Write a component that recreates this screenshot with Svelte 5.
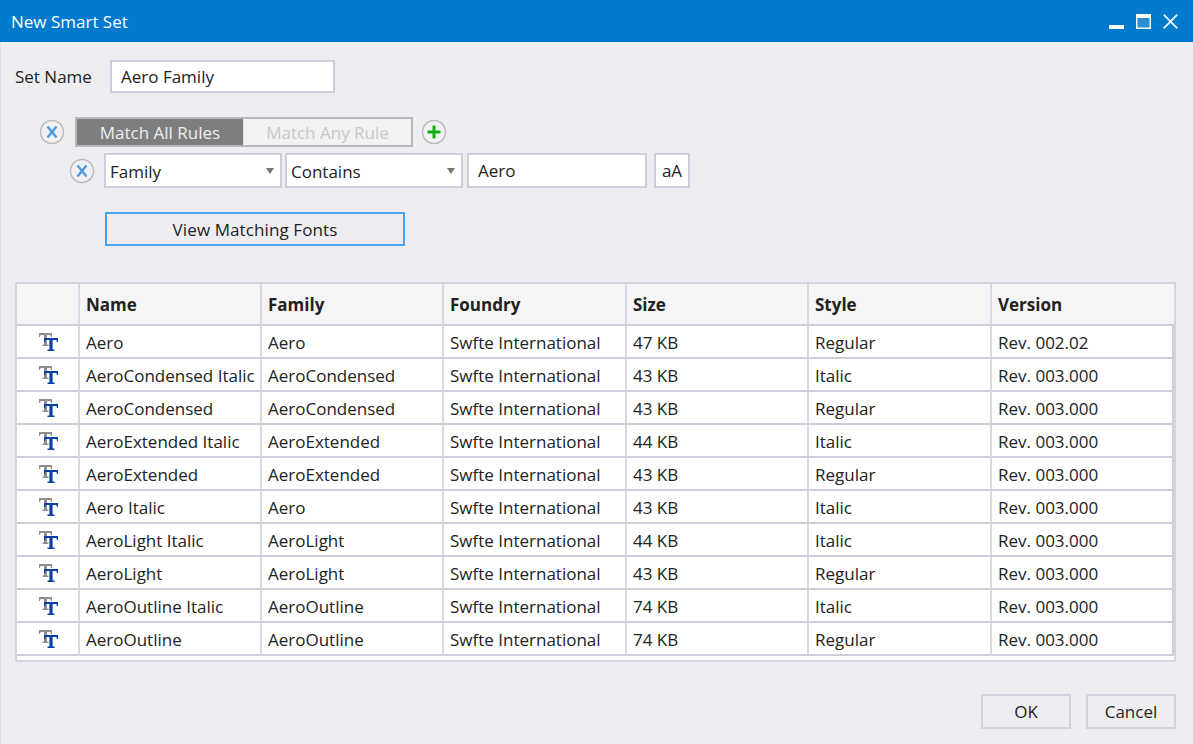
<script>
  const fonts = [
    ['Aero','Aero','47 KB','Regular','Rev. 002.02'],
    ['AeroCondensed Italic','AeroCondensed','43 KB','Italic','Rev. 003.000'],
    ['AeroCondensed','AeroCondensed','43 KB','Regular','Rev. 003.000'],
    ['AeroExtended Italic','AeroExtended','44 KB','Italic','Rev. 003.000'],
    ['AeroExtended','AeroExtended','43 KB','Regular','Rev. 003.000'],
    ['Aero Italic','Aero','43 KB','Italic','Rev. 003.000'],
    ['AeroLight Italic','AeroLight','44 KB','Italic','Rev. 003.000'],
    ['AeroLight','AeroLight','43 KB','Regular','Rev. 003.000'],
    ['AeroOutline Italic','AeroOutline','74 KB','Italic','Rev. 003.000'],
    ['AeroOutline','AeroOutline','74 KB','Regular','Rev. 003.000']
  ];
  const heads = ['Name','Family','Foundry','Size','Style','Version'];
</script>

{#snippet removeIcon()}
  <svg class="round" width="26" height="26" viewBox="0 0 26 26">
    <circle cx="13" cy="13" r="11.5" fill="#f1f1f4" stroke="#bcbcbc" stroke-width="1.5"/>
    <path d="M8.5 7.5 L17.5 18.5 M17.5 7.5 L8.5 18.5" stroke="#4a9be0" stroke-width="2.4" fill="none"/>
  </svg>
{/snippet}

<div class="window">
  <header class="titlebar">
    <span class="title">New Smart Set</span>
    <div class="controls">
      <svg class="min" width="15" height="4" viewBox="0 0 15 4"><rect width="15" height="4" fill="#fff"/></svg>
      <svg width="15" height="15" viewBox="0 0 15 15"><rect x="1" y="4" width="13" height="10" fill="#2a8fd6"/><path d="M0.7 0V15M14.3 0V15M0 14.3H15" stroke="#fff" stroke-width="1.4"/><rect width="15" height="4" fill="#fff"/></svg>
      <svg width="15" height="15" viewBox="0 0 15 15"><path d="M0.7 0.7 L14.3 14.3 M14.3 0.7 L0.7 14.3" stroke="#fff" stroke-width="1.7" fill="none"/></svg>
    </div>
  </header>

  <main class="body">
    <div class="name-row">
      <span class="label">Set Name</span>
      <div class="box name-box">Aero Family</div>
    </div>

    <div class="rule-row">
      {@render removeIcon()}
      <div class="toggle">
        <span class="on">Match All Rules</span>
        <span class="off">Match Any Rule</span>
      </div>
      <svg class="round" width="26" height="26" viewBox="0 0 26 26">
        <circle cx="13" cy="13" r="11.5" fill="#f1f1f4" stroke="#bcbcbc" stroke-width="1.5"/>
        <path d="M13 6.5V19.5M6.5 13H19.5" stroke="#10b010" stroke-width="3" fill="none"/>
      </svg>
    </div>

    <div class="cond-row">
      {@render removeIcon()}
      <div class="box select sel1">Family<i class="caret"></i></div>
      <div class="box select sel2">Contains<i class="caret"></i></div>
      <div class="box value">Aero</div>
      <div class="box case">aA</div>
    </div>

    <button class="view">View Matching Fonts</button>

    <div class="table">
      <div class="row head">
        <div class="cell"></div>
        {#each heads as h}<div class="cell">{h}</div>{/each}
      </div>
      {#each fonts as f}
        <div class="row">
          <div class="cell icon">
            <svg width="19" height="19" viewBox="0 0 19 19">
              <path d="M0 0H13V4H12L11.4 2H8V11.5H9.5V13H3.5V11.5H5V2H1.6L1 4H0Z" fill="#8e8e8e"/>
              <path d="M5 5H19V9H18L17.4 7H13.6V16.5H15.5V18H8.5V16.5H10.4V7H6.6L6 9H5Z" fill="#0a3fa5"/>
            </svg>
          </div>
          <div class="cell">{f[0]}</div>
          <div class="cell">{f[1]}</div>
          <div class="cell">Swfte International</div>
          <div class="cell">{f[2]}</div>
          <div class="cell">{f[3]}</div>
          <div class="cell">{f[4]}</div>
        </div>
      {/each}
    </div>

    <footer class="actions">
      <button class="btn">OK</button>
      <button class="btn">Cancel</button>
    </footer>
  </main>
</div>

<style>
  :global(body) { margin: 0; background: #eeeef2; }
  .window {
    width: 1193px; height: 744px; box-sizing: border-box; overflow: hidden;
    background: #eeeef2; color: #222;
    font-family: "Open Sans", "Noto Sans", sans-serif; font-size: 17px;
    display: flex; flex-direction: column;
  }
  .titlebar {
    height: 42px; flex: none; background: #007acc; color: #fff;
    display: flex; justify-content: space-between; align-items: center;
    padding: 0 15px 0 11px; box-sizing: border-box;
  }
  .controls { display: flex; align-items: flex-start; gap: 12px; align-self: flex-start; padding-top: 14px; }
  .min { margin-top: 11px; }
  .body { flex: 1; display: flex; flex-direction: column; padding: 18px 17px 0 14px; border-left: 1px solid #e2e2e6; }
  .box {
    background: #fff; border: 2px solid #cccedb; box-sizing: border-box;
    display: flex; align-items: center; height: 35px;
  }
  .name-row { display: flex; align-items: center; justify-content: flex-start; }
  .label { width: 95px; }
  .name-box { width: 225px; height: 33px; padding-left: 9px; }
  .rule-row { display: flex; align-items: center; margin: 24px 0 0 24px; height: 30px; }
  .round { flex: none; display: block; }
  .toggle {
    display: flex; margin-left: 10px; width: 338px; height: 30px; box-sizing: border-box;
    border: 2px solid #b7b7b7; background: #f2f2f2;
  }
  .toggle span { display: flex; align-items: center; justify-content: center; }
  .on { width: 166px; background: #7e7e7e; color: #eeeeee; }
  .off { flex: 1; color: #c8c8c8; border-left: 1px solid #dedede; }
  .rule-row .round:last-child { margin-left: 8px; }
  .cond-row { display: flex; align-items: center; margin: 6px 0 0 54px; }
  .select { position: relative; padding: 1px 0 0 4px; }
  .sel1 { width: 178px; margin-left: 9px; }
  .sel2 { width: 178px; margin-left: 3px; }
  .value { width: 180px; margin-left: 4px; padding-left: 9px; }
  .case { width: 36px; margin-left: 7px; justify-content: center; }
  .caret {
    position: absolute; right: 6px; top: 13px; width: 0; height: 0;
    border-left: 4.5px solid transparent; border-right: 4.5px solid transparent; border-top: 6px solid #777;
  }
  .view {
    display: block; width: 300px; height: 34px; margin: 24px 0 0 90px; box-sizing: border-box;
    background: #eeeef2; border: 2px solid #4aa3ee; color: #222; font: inherit; letter-spacing: 0.1px; padding: 0;
  }
  .table {
    margin-top: 36px; width: 1161px; height: 380px; box-sizing: border-box; flex: none;
    background: #fff; border: 2px solid #d3d4df;
  }
  .row {
    display: grid; grid-template-columns: 63px 182px 182px 183px 182px 183px 183px;
    height: 33px; box-sizing: border-box; border-bottom: 2px solid #cccedb; width: 1157px;
    border-right: 2px solid #cccedb;
  }
  .head { height: 42px; background: #f5f5f5; font-weight: 700; border-right: none; }
  .cell {
    border-right: 2px solid #d8d9e3; padding: 1px 0 0 6px; box-sizing: border-box;
    display: flex; align-items: center; white-space: nowrap; overflow: hidden;
  }
  .head .cell { padding-top: 0; }
  .cell:last-child { border-right: none; }
  .cell.icon { padding: 1px 0 0 22px; }
  .actions { display: flex; justify-content: flex-end; gap: 15px; margin-top: 32px; }
  .btn {
    width: 90px; height: 35px; background: #eeeef2; border: 2px solid #d3d4df; color: #222; font: inherit; padding: 0;
  }
</style>
